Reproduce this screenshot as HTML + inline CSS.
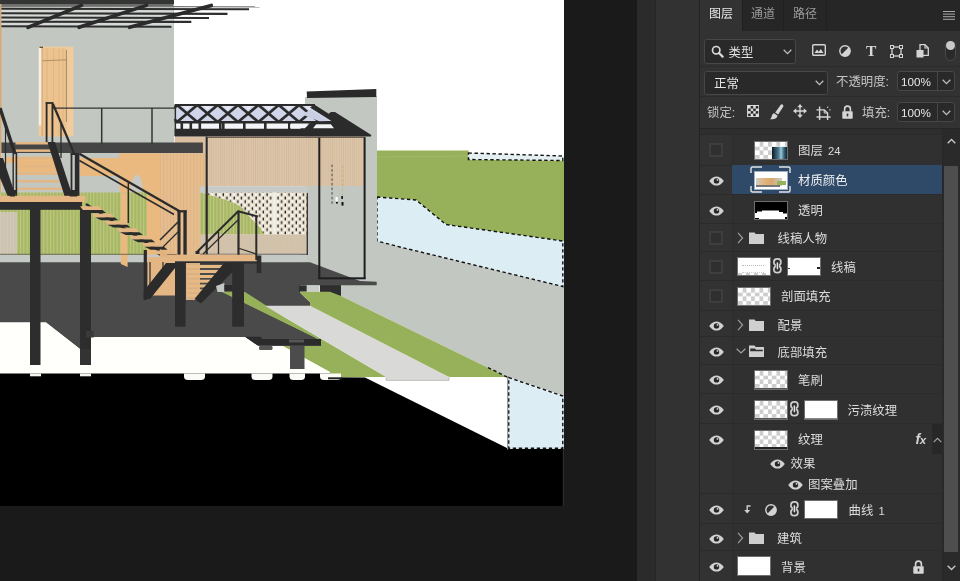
<!DOCTYPE html>
<html lang="zh-CN">
<head>
<meta charset="utf-8">
<title>Photoshop 图层</title>
<style>
html,body{margin:0;padding:0;background:#1a1a1a;overflow:hidden}
body{width:960px;height:581px;position:relative;font-family:"Liberation Sans","Noto Sans CJK SC",sans-serif;font-size:12px;color:#d6d6d6;line-height:1}
.abs{position:absolute}
#cv{position:absolute;left:0;top:0;width:563.5px;height:506px;display:block}
#g1{position:absolute;left:637px;top:0;width:18px;height:581px;background:#2b2b2b}
#g2{position:absolute;left:655px;top:0;width:45px;height:581px;background:#323232;border-left:1px solid #262626;box-sizing:border-box}
#panel{position:absolute;left:699px;top:0;width:261px;height:581px;background:#323232;border-left:1px solid #242424;box-sizing:border-box;overflow:hidden}
#panel .in{position:absolute;left:-700px;top:0;width:960px;height:581px;will-change:transform}
.tabbar{position:absolute;left:700px;top:0;width:260px;height:30px;background:#262626;border-bottom:1px solid #262626}
.tab{position:absolute;top:0;height:31px;line-height:28px;text-align:center;color:#9a9a9a;font-size:12px;border-right:1px solid #202020;box-sizing:border-box}
.tab.on{background:#323232;color:#e6e6e6}
.box{position:absolute;box-sizing:border-box;border:1px solid #474747;border-radius:3px;background:#292929}
.t{position:absolute;white-space:nowrap;font-size:12.4px;line-height:14px;height:14px;color:#dcdcdc}
.row{position:absolute;left:700px;width:242px;background:#303030;border-top:1px solid #2b2b2b;box-sizing:border-box}
.row .ec{position:absolute;left:0;top:0;bottom:0;width:32.5px;background:#323232;border-right:1px solid #2c2c2c;box-sizing:border-box}
.row.sel .bg{position:absolute;left:32px;top:-1.4px;right:0;bottom:0.5px;background:#2f4a69}
.eye{position:absolute;width:15px;height:10px}
.ebox{position:absolute;left:709px;width:14px;height:14px;box-sizing:border-box;border:2px solid #3e3e3e;background:#2f2f2f}
.th{position:absolute;width:34px;height:19.5px;box-sizing:border-box;border:1px solid #6e6e6e;border-top-width:1.5px;background:#fff;overflow:hidden}
.ck{background:conic-gradient(#cdcdcd 25%,#fff 0 50%,#cdcdcd 0 75%,#fff 0) 0 0/8.4px 8.4px}
</style>
</head>
<body>
<!--CANVAS-->
<svg id="cv" viewBox="0 0 563.5 506">
<defs>
<pattern id="pg" width="3.33" height="10" patternUnits="userSpaceOnUse"><rect width="3.33" height="10" fill="#a2ba60"/><rect x="0" width="1.1" height="10" fill="#c9c28c"/></pattern>
<pattern id="pt" width="2.2" height="10" patternUnits="userSpaceOnUse"><rect width="2.2" height="10" fill="#dcc4a8"/><rect x="0" width="0.7" height="10" fill="#d2b99c"/></pattern>
<pattern id="pt2" width="3.33" height="10" patternUnits="userSpaceOnUse"><rect width="3.33" height="10" fill="#cdc4b4"/><rect x="0" width="1.3" height="10" fill="#d9bf9d"/></pattern>
<pattern id="pgr" width="3.33" height="10" patternUnits="userSpaceOnUse"><rect width="3.33" height="10" fill="#c9c3b6"/><rect x="0" width="1.1" height="10" fill="#d8c9ae"/></pattern>
<pattern id="po" width="3.33" height="10" patternUnits="userSpaceOnUse"><rect width="3.33" height="10" fill="#e6bd8e"/><rect x="0" width="1" height="10" fill="#deb384"/></pattern>
<pattern id="pb" width="7.3" height="7" patternUnits="userSpaceOnUse" x="207.5" y="192.5"><rect width="7.3" height="7" fill="#f6f3ea"/><rect x="2.2" width="1.2" height="7" fill="#e6d9c2"/><rect x="5.85" width="1.2" height="7" fill="#e6d9c2"/><rect x="0.5" y="0.6" width="1.3" height="3" fill="#141210"/><rect x="4.15" y="4.1" width="1.3" height="3" fill="#141210"/></pattern>
</defs>
<rect x="0" y="0" width="564" height="506" fill="#ffffff" />
<polygon points="377,150.5 468.5,150.5 468.5,159.5 564,160.5 564,242 446,224.5 416,200 377,197" fill="#96b15a" />
<line x1="377" y1="157" x2="468" y2="156" stroke="#a3bb6a" stroke-width="0.7" />
<polygon points="468.5,153 564,156 564,160.5 468.5,159.5" fill="#e4eff2" />
<polygon points="377,197 416,200 446,224.5 564,241 564,287 400,247 377,241" fill="#dcedf3" />
<polygon points="300,241 377,241 400,247 564,287 564,396 508,377 504,375.5 341,296 341,285 300,285" fill="#c2c7c2" />
<polygon points="377,197 416,200 446,224.5 562.8,241 562.8,286.5 400,247 377,241" fill="none" stroke="#111" stroke-width="1.4" stroke-dasharray="3.4 2.6"/>
<polygon points="468.5,153 562.8,156 562.8,160.5 468.5,159.5" fill="none" stroke="#111" stroke-width="1.4" stroke-dasharray="3.4 2.6"/>
<polygon points="305,97 377,96 377,285 305,285" fill="#c2c7c2" />
<polygon points="306.7,91.5 376.3,89 376.3,97 307,98" fill="#2a2a2a" />
<rect x="0" y="0" width="174" height="146" fill="#c2c7c2" />
<rect x="0" y="0" width="1.4" height="200" fill="#d9a76f" />
<rect x="0" y="0" width="174" height="4" fill="#353535" />
<rect x="1.4" y="4" width="172" height="3.2" fill="#6a6c6a" />
<rect x="1.4" y="7.2" width="171.6" height="19.5" fill="#d6dad6" />
<line x1="1.4" y1="6.2" x2="259.5" y2="6.8" stroke="#7c7e7c" stroke-width="1.3" />
<line x1="1.4" y1="8.7" x2="249" y2="9.2" stroke="#2e2e2e" stroke-width="2.1" />
<line x1="1.4" y1="13.2" x2="227.5" y2="13.9" stroke="#2e2e2e" stroke-width="2.1" />
<line x1="1.4" y1="17.5" x2="209" y2="18" stroke="#2e2e2e" stroke-width="2.1" />
<line x1="1.4" y1="21.7" x2="191.3" y2="21.9" stroke="#2e2e2e" stroke-width="2.1" />
<line x1="1.4" y1="26.3" x2="171.5" y2="26.7" stroke="#2e2e2e" stroke-width="2.1" />
<line x1="81.5" y1="5.4" x2="28" y2="27.3" stroke="#2b2b2b" stroke-width="3.6" stroke-linecap="round"/>
<line x1="146.5" y1="5.4" x2="79" y2="27.3" stroke="#2b2b2b" stroke-width="3.6" stroke-linecap="round"/>
<line x1="211.3" y1="5.4" x2="129.5" y2="27.3" stroke="#2b2b2b" stroke-width="3.6" stroke-linecap="round"/>
<rect x="38.7" y="46.7" width="34.8" height="89.6" fill="#f0cc9d" />
<rect x="38.7" y="47.5" width="3.0" height="78" fill="#f6efe2" />
<rect x="42" y="48" width="24.3" height="88.3" fill="#ecc28e" />
<line x1="47" y1="49" x2="47" y2="136" stroke="#e0b27c" stroke-width="0.8" />
<line x1="53.5" y1="49" x2="53.5" y2="136" stroke="#e0b27c" stroke-width="0.8" />
<line x1="59" y1="49" x2="59" y2="136" stroke="#e0b27c" stroke-width="0.8" />
<line x1="63" y1="49" x2="63" y2="136" stroke="#e0b27c" stroke-width="0.8" />
<line x1="42.3" y1="60.8" x2="66.5" y2="59.8" stroke="#a88a66" stroke-width="0.9" />
<line x1="42.0" y1="48" x2="42.0" y2="136" stroke="#c29a6c" stroke-width="0.8" />
<line x1="66.4" y1="50" x2="66.4" y2="122" stroke="#8c7a62" stroke-width="0.8" />
<rect x="39.5" y="46.7" width="3.5" height="1.3" fill="#5a5040" />
<rect x="1.4" y="146" width="204" height="47" fill="#c2c7c2" />
<rect x="174.7" y="136.5" width="31" height="17" fill="#d9bf9f" />
<polygon points="5,157 52,156.5 56,163 57,172.5 17.5,172.5 17,163 6,163" fill="#e9b980" />
<polygon points="80,158 118,158 120,153.3 160,153.3 160,192.5 120,192.5 119,176 80,176" fill="#e9b980" />
<polygon points="130,192.5 131,183 134,177 137.5,174.5 141,178 143.5,192.5" fill="#c6c9c4" />
<rect x="160" y="153.3" width="45.8" height="102" fill="url(#po)" />
<rect x="0" y="192.5" width="147" height="62.3" fill="url(#pg)" />
<rect x="0" y="212" width="17" height="43" fill="url(#pgr)" />
<rect x="120.8" y="192.5" width="6.5" height="74" fill="#e9b980" />
<rect x="146.7" y="192.5" width="13.3" height="62.5" fill="#e9b980" />
<rect x="208" y="136.5" width="157" height="50" fill="url(#pt)" />
<rect x="200" y="186.3" width="165" height="7.2" fill="#c6cac8" />
<rect x="207.5" y="192.5" width="100" height="42" fill="url(#pb)" />
<rect x="272.6" y="192.5" width="3.6" height="42" fill="#f1eee6" />
<polygon points="200,192.5 207.5,194.5 225,199.4 236,203.7 242.5,208 250,217.5 258.7,226 264,233.5 264,234.5 200,234.5" fill="url(#pg)" />
<rect x="200" y="234.4" width="107.5" height="19.6" fill="url(#pt2)" />
<line x1="200" y1="254.3" x2="307" y2="254.3" stroke="#3a3a3a" stroke-width="0.9" />
<rect x="0" y="254.8" width="307" height="8" fill="#c4c9c5" />
<rect x="308" y="186" width="57" height="100" fill="#c2c7c2" />
<polygon points="0,262.3 310,262.3 360,281 376.7,281.7 376.7,285.3 341,285.3 341,296 320,296 320,285.3 300,285.3 300,292.5 305,297.5 310,302 310,306 265,306 317,338.5 321,339 321,345.8 258,345.8 245,337 86,337 86,349 80,349 46,322.5 0,322.5" fill="#4a4a4a" />
<polygon points="120.8,254 127.6,254 127.6,267 120.8,264" fill="#e9b980" />
<line x1="0" y1="254.3" x2="147" y2="254.3" stroke="#55553f" stroke-width="0.8" />
<rect x="306.7" y="285.3" width="12.8" height="6.4" fill="#c9cdc9" />
<rect x="299" y="285.3" width="7.7" height="6.4" fill="#2e2e2e" />
<rect x="320" y="285.3" width="21" height="10.5" fill="#2e2e2e" />
<polygon points="222,292 245,292 317,338.5 265,306 386,377 330,377 330,372 283,346 321,346 321,339 317,338.5" fill="#96b15a" />
<polygon points="222,291.7 232,291.7 265,306 386,377 330,377 330,372 283,346.5 321,346 321,339 317,338.5" fill="#96b15a" />
<polygon points="265,305.8 310,305.8 449,377 449,380.3 386,380.3 386,377" fill="#d9dad8" />
<polygon points="300,291.7 330,291.7 341,296 504,375.5 508,377 449,377 310,305.8 310,302 305,297.5 300,292.5" fill="#96b15a" />
<polygon points="0,322.5 46,322.5 80,349 86,349 86,337 245,337 258,345.8 283,346 330,372 330,373.5 0,373.5" fill="#fffffb" />
<polygon points="365,377.5 508,377.5 508,448.5" fill="#ffffff" />
<polygon points="0,373.5 330,373.5 330,377.3 365,377.5 508,448.5 508,449 564,449 564,506 0,506" fill="#000000" />
<polygon points="245,336.7 261,336.7 262,339 321,339 321,345.8 258,345.8" fill="#2b2b2b" />
<rect x="289" y="339.5" width="15" height="3" fill="#555555" />
<rect x="259" y="345.8" width="13.5" height="4.2" fill="#555555" rx="1.5"/>
<rect x="290" y="345.8" width="14.5" height="23.2" fill="#4c4c4c" />
<rect x="30" y="373.5" width="11" height="2.8" fill="#f4f4f0" />
<rect x="80" y="373.5" width="11" height="2.8" fill="#f4f4f0" />
<path d="M184 373.5 H205 V376.5 Q205 380 201 380 H188 Q184 380 184 376.5Z" fill="#fafaf6"/>
<path d="M251.5 373.5 H272.5 V376.5 Q272.5 380 268.5 380 H255.5 Q251.5 380 251.5 376.5Z" fill="#fafaf6"/>
<path d="M289.5 373.5 H305.0 V376.5 Q305.0 380 301.0 380 H293.5 Q289.5 380 289.5 376.5Z" fill="#fafaf6"/>
<path d="M320 373.5 H341 V376.5 Q341 380 337 380 H324 Q320 380 320 376.5Z" fill="#fafaf6"/>
<rect x="328" y="377.3" width="14" height="2" fill="#222" />
<polygon points="386,376.5 449,376.5 449,380.3 386,380.3" fill="#d9dad8" />
<path d="M386 377.3 V380.4 H449 V377.3" fill="none" stroke="#a9aaa8" stroke-width="0.7"/>
<polygon points="508,377 564,396 564,449 508,449" fill="#dcedf3" />
<polygon points="508.7,377.6 562.8,396 562.8,448.2 508.7,448.2" fill="none" stroke="#111" stroke-width="1.4" stroke-dasharray="3.4 2.6"/>
<rect x="507" y="377" width="1.2" height="72.5" fill="#9a9a9a" />
<line x1="488" y1="367.6" x2="508" y2="377.4" fill="none" stroke="#111" stroke-width="1.4" stroke-dasharray="3.4 2.6"/>
<rect x="562.9" y="449" width="0.6" height="57" fill="#5a5a5a" />
<rect x="1.4" y="142.5" width="201.5" height="10.5" fill="#454545" />
<polygon points="174.7,104.5 314.2,104.5 334,122 174.7,122" fill="#d0d5ea" />
<rect x="174.7" y="122" width="160" height="7" fill="#f4f5f8" />
<line x1="174.7" y1="108" x2="177" y2="105" stroke="#2b2b2b" stroke-width="2.6" />
<line x1="174.7" y1="119" x2="177" y2="122" stroke="#2b2b2b" stroke-width="2.6" />
<line x1="177.0" y1="105" x2="197.35" y2="122" stroke="#2b2b2b" stroke-width="2.7" />
<line x1="177.0" y1="122" x2="197.35" y2="105" stroke="#2b2b2b" stroke-width="2.7" />
<polygon points="182.175,106 192.175,106 187.175,110.3" fill="#e4e7f3" />
<line x1="197.35" y1="105" x2="217.7" y2="122" stroke="#2b2b2b" stroke-width="2.7" />
<line x1="197.35" y1="122" x2="217.7" y2="105" stroke="#2b2b2b" stroke-width="2.7" />
<polygon points="202.52499999999998,106 212.52499999999998,106 207.52499999999998,110.3" fill="#e4e7f3" />
<line x1="217.7" y1="105" x2="238.05" y2="122" stroke="#2b2b2b" stroke-width="2.7" />
<line x1="217.7" y1="122" x2="238.05" y2="105" stroke="#2b2b2b" stroke-width="2.7" />
<polygon points="222.875,106 232.875,106 227.875,110.3" fill="#e4e7f3" />
<line x1="238.05" y1="105" x2="258.4" y2="122" stroke="#2b2b2b" stroke-width="2.7" />
<line x1="238.05" y1="122" x2="258.4" y2="105" stroke="#2b2b2b" stroke-width="2.7" />
<polygon points="243.225,106 253.225,106 248.225,110.3" fill="#e4e7f3" />
<line x1="258.4" y1="105" x2="278.75" y2="122" stroke="#2b2b2b" stroke-width="2.7" />
<line x1="258.4" y1="122" x2="278.75" y2="105" stroke="#2b2b2b" stroke-width="2.7" />
<polygon points="263.575,106 273.575,106 268.575,110.3" fill="#e4e7f3" />
<line x1="278.75" y1="105" x2="299.1" y2="122" stroke="#2b2b2b" stroke-width="2.7" />
<line x1="278.75" y1="122" x2="299.1" y2="105" stroke="#2b2b2b" stroke-width="2.7" />
<polygon points="283.925,106 293.925,106 288.925,110.3" fill="#e4e7f3" />
<line x1="299.1" y1="105" x2="319.45000000000005" y2="122" stroke="#2b2b2b" stroke-width="2.7" />
<line x1="299.1" y1="122" x2="311.5" y2="111.6" stroke="#2b2b2b" stroke-width="2.7" />
<polygon points="304.27500000000003,106 314.27500000000003,106 309.27500000000003,110.3" fill="#e4e7f3" />
<line x1="174.7" y1="105" x2="315" y2="105" stroke="#2b2b2b" stroke-width="1.8" />
<line x1="174.7" y1="122.3" x2="334" y2="122.3" stroke="#2b2b2b" stroke-width="2.4" />
<line x1="175.3" y1="105" x2="175.3" y2="136" stroke="#2b2b2b" stroke-width="1.6" />
<rect x="180.5" y="122" width="2.6" height="7" fill="#2b2b2b" />
<rect x="189.5" y="122" width="2.6" height="7" fill="#2b2b2b" />
<rect x="198.5" y="122" width="2.6" height="7" fill="#2b2b2b" />
<rect x="219" y="122" width="2.6" height="7" fill="#2b2b2b" />
<rect x="222" y="122" width="2.6" height="7" fill="#2b2b2b" />
<rect x="243" y="122" width="2.6" height="7" fill="#2b2b2b" />
<rect x="264" y="122" width="2.6" height="7" fill="#2b2b2b" />
<rect x="288" y="122" width="2.6" height="7" fill="#2b2b2b" />
<polygon points="314.2,104.4 328.75,113.75 330.8,112 335,112 371.3,135 371,136.4 174.7,136.4 174.7,128.7 300,128.7 309,123.4 318,121.2 333,122 310,107.5" fill="#2b2b2b" />
<polygon points="302.7,114.8 310,109.6 315.2,112.7 327.7,121 319.4,121.3" fill="#c9cfe2" />
<polygon points="313,128.3 334,128.3 330.8,124.2 316.25,124.2" fill="#f1f3f6" />
<polygon points="290.2,128.3 304.8,128.3 309,124.2 290.2,124.2" fill="#f4f5f8" />
<rect x="205.6" y="136.5" width="2.2" height="118" fill="#2e2a28" />
<rect x="318.3" y="137" width="2" height="142" fill="#1f1f1f" />
<rect x="363.6" y="137" width="2" height="142" fill="#1f1f1f" />
<rect x="318.3" y="277.3" width="47.3" height="2" fill="#1f1f1f" />
<line x1="208" y1="137.3" x2="365" y2="137.3" stroke="#5a4a3c" stroke-width="1" />
<rect x="306.6" y="193" width="1.4" height="62" fill="#3a3532" />
<rect x="331.4" y="164.5" width="1.3" height="2.6" fill="#6a6660" />
<rect x="331.4" y="169.1" width="1.3" height="2.6" fill="#6a6660" />
<rect x="331.4" y="173.7" width="1.3" height="2.6" fill="#6a6660" />
<rect x="331.4" y="178.3" width="1.3" height="2.6" fill="#6a6660" />
<rect x="331.4" y="182.9" width="1.3" height="2.6" fill="#6a6660" />
<rect x="331.4" y="187.5" width="1.3" height="2.6" fill="#6a6660" />
<rect x="331.4" y="192.1" width="1.3" height="2.6" fill="#6a6660" />
<rect x="331.4" y="196.7" width="1.3" height="2.6" fill="#6a6660" />
<rect x="331.4" y="201.3" width="1.3" height="2.6" fill="#6a6660" />
<rect x="342" y="165.5" width="0.9" height="2.4" fill="#c9b57a" />
<rect x="337" y="166.0" width="0.8" height="2.2" fill="#cfc9a8" />
<rect x="342" y="170.1" width="0.9" height="2.4" fill="#c9b57a" />
<rect x="337" y="170.6" width="0.8" height="2.2" fill="#cfc9a8" />
<rect x="342" y="174.7" width="0.9" height="2.4" fill="#c9b57a" />
<rect x="337" y="175.2" width="0.8" height="2.2" fill="#cfc9a8" />
<rect x="342" y="179.3" width="0.9" height="2.4" fill="#c9b57a" />
<rect x="337" y="179.8" width="0.8" height="2.2" fill="#cfc9a8" />
<rect x="342" y="183.9" width="0.9" height="2.4" fill="#c9b57a" />
<rect x="337" y="184.4" width="0.8" height="2.2" fill="#cfc9a8" />
<rect x="342" y="188.5" width="0.9" height="2.4" fill="#c9b57a" />
<rect x="337" y="189.0" width="0.8" height="2.2" fill="#cfc9a8" />
<rect x="342" y="193.1" width="0.9" height="2.4" fill="#c9b57a" />
<rect x="337" y="193.6" width="0.8" height="2.2" fill="#cfc9a8" />
<rect x="335.5" y="197" width="2.2" height="4" fill="#fff" />
<rect x="341.3" y="196" width="1.6" height="3" fill="#111" />
<rect x="341.5" y="202" width="2" height="3.6" fill="#111" />
<rect x="336" y="202" width="1.8" height="1.6" fill="#111" />
<line x1="53" y1="108.2" x2="175" y2="108.2" stroke="#333" stroke-width="1.3" />
<line x1="101.7" y1="108" x2="101.7" y2="144.5" stroke="#333" stroke-width="1.5" />
<line x1="152" y1="108" x2="152" y2="144.5" stroke="#333" stroke-width="1.5" />
<line x1="46.6" y1="102.5" x2="46.6" y2="142.5" stroke="#2b2b2b" stroke-width="1.8" />
<line x1="52.4" y1="102.5" x2="52.4" y2="142.5" stroke="#2b2b2b" stroke-width="1.8" />
<line x1="45.7" y1="103" x2="53.3" y2="103" stroke="#2b2b2b" stroke-width="1.8" />
<rect x="15.5" y="142" width="33.2" height="2.5" fill="#e3b683" />
<rect x="15.5" y="149.4" width="36.5" height="2.5" fill="#e3b683" />
<rect x="15.5" y="156.9" width="38.9" height="2.5" fill="#e3b683" />
<rect x="15.5" y="165" width="41.5" height="2.5" fill="#e3b683" />
<rect x="15.5" y="172.5" width="44.5" height="2.5" fill="#e3b683" />
<rect x="15.5" y="180" width="47.0" height="2.5" fill="#e3b683" />
<rect x="15.5" y="187.5" width="50.099999999999994" height="2.5" fill="#e3b683" />
<polygon points="47.5,142 55,142 72.5,196 64.5,196" fill="#2b2b2b" />
<line x1="53" y1="104" x2="74.5" y2="154.5" stroke="#2b2b2b" stroke-width="2.2" />
<line x1="61" y1="124" x2="61" y2="158" stroke="#2b2b2b" stroke-width="1.3" />
<rect x="70.6" y="153.5" width="1.8" height="43" fill="#2b2b2b" />
<rect x="74.8" y="153.5" width="4.6" height="43" fill="#2b2b2b" />
<rect x="70.6" y="153" width="8.8" height="2" fill="#2b2b2b" />
<line x1="0" y1="108" x2="15" y2="154" stroke="#2b2b2b" stroke-width="3.4" />
<rect x="12.5" y="153" width="1.4" height="44" fill="#2b2b2b" />
<rect x="15.6" y="153" width="1.6" height="44" fill="#2b2b2b" />
<polygon points="0,158 3,158 16,197 8,197 0,178" fill="#2b2b2b" />
<line x1="5.5" y1="126" x2="5.5" y2="172" stroke="#2b2b2b" stroke-width="1.2" />
<rect x="0" y="195.8" width="85.5" height="6.2" fill="#e3b683" />
<rect x="0" y="202" width="82" height="7.8" fill="#2d2d2d" />
<polygon points="8,190 17,190 15,196.5 10,196.5" fill="#2b2b2b" />
<polygon points="66,190 79,190 77,196.5 70,196.5" fill="#2b2b2b" />
<rect x="30" y="209" width="10.5" height="156" fill="#2d2d2d" />
<rect x="80" y="209" width="11" height="140" fill="#2d2d2d" />
<rect x="80" y="349" width="11" height="16" fill="#333" />
<rect x="86" y="331" width="7.7" height="6.5" fill="#3a3a3a" />
<line x1="86" y1="204" x2="172" y2="259" stroke="#2b2b2b" stroke-width="2.2" />
<polygon points="80.0,206.3 99.0,206.3 102.5,210.10000000000002 83.0,210.10000000000002" fill="#e3b683" />
<polygon points="83.0,210.10000000000002 102.5,210.10000000000002 106.0,212.9 89.0,212.9" fill="#2b2b2b" />
<polygon points="92.3,213.65 111.3,213.65 114.8,217.45000000000002 95.3,217.45000000000002" fill="#e3b683" />
<polygon points="95.3,217.45000000000002 114.8,217.45000000000002 118.3,220.25 101.3,220.25" fill="#2b2b2b" />
<polygon points="104.6,221.0 123.6,221.0 127.1,224.8 107.6,224.8" fill="#e3b683" />
<polygon points="107.6,224.8 127.1,224.8 130.6,227.6 113.6,227.6" fill="#2b2b2b" />
<polygon points="116.9,228.35000000000002 135.9,228.35000000000002 139.4,232.15000000000003 119.9,232.15000000000003" fill="#e3b683" />
<polygon points="119.9,232.15000000000003 139.4,232.15000000000003 142.9,234.95000000000002 125.9,234.95000000000002" fill="#2b2b2b" />
<polygon points="129.2,235.70000000000002 148.2,235.70000000000002 151.7,239.50000000000003 132.2,239.50000000000003" fill="#e3b683" />
<polygon points="132.2,239.50000000000003 151.7,239.50000000000003 155.2,242.3 138.2,242.3" fill="#2b2b2b" />
<polygon points="141.5,243.05 160.5,243.05 164.0,246.85000000000002 144.5,246.85000000000002" fill="#e3b683" />
<polygon points="144.5,246.85000000000002 164.0,246.85000000000002 167.5,249.65 150.5,249.65" fill="#2b2b2b" />
<polygon points="153.8,250.4 172.8,250.4 176.3,254.20000000000002 156.8,254.20000000000002" fill="#e3b683" />
<polygon points="156.8,254.20000000000002 176.3,254.20000000000002 179.8,257.0 162.8,257.0" fill="#2b2b2b" />
<line x1="79.4" y1="153.8" x2="180" y2="211.5" stroke="#2b2b2b" stroke-width="2.4" />
<line x1="79.4" y1="160.5" x2="174" y2="214.5" stroke="#2b2b2b" stroke-width="1.5" />
<line x1="128.3" y1="183" x2="128.3" y2="223" stroke="#2b2b2b" stroke-width="1.4" />
<rect x="177.5" y="210.7" width="3" height="45" fill="#2b2b2b" />
<rect x="183.4" y="210.7" width="3.3" height="45" fill="#2b2b2b" />
<rect x="177.5" y="210.2" width="9.2" height="2.2" fill="#2b2b2b" />
<line x1="178" y1="222" x2="160" y2="240" stroke="#2b2b2b" stroke-width="1.6" />
<line x1="178" y1="232" x2="163" y2="247" stroke="#2b2b2b" stroke-width="1.3" />
<rect x="166.7" y="254.6" width="90.3" height="6.8" fill="#e3b683" />
<rect x="168" y="261.3" width="93" height="2.2" fill="#2d2d2d" />
<rect x="256.7" y="255.5" width="4.6" height="17.5" fill="#2d2d2d" />
<polygon points="160,249 168,255 168,261 160,256" fill="#e2b27c" />
<rect x="175" y="263" width="10.6" height="63.7" fill="#2d2d2d" />
<rect x="232.2" y="263" width="11.8" height="63.7" fill="#2d2d2d" />
<rect x="147.5" y="257" width="27.5" height="38.5" fill="#e3b683" />
<rect x="143.7" y="250" width="3.2" height="50" fill="#2b2b2b" />
<polygon points="166,263 175,263 175,268 150,299 143.7,299 143.7,291" fill="#2b2b2b" />
<line x1="150" y1="262" x2="150" y2="285" stroke="#2b2b2b" stroke-width="1.2" />
<line x1="163" y1="262" x2="163" y2="272" stroke="#2b2b2b" stroke-width="1.2" />
<rect x="186" y="263" width="14" height="37" fill="#d9b184" />
<rect x="187" y="265" width="43" height="3" fill="#e6b985" />
<rect x="187" y="270" width="39" height="3" fill="#e6b985" />
<rect x="187" y="275" width="34" height="3" fill="#e6b985" />
<rect x="187" y="279.7" width="29" height="3" fill="#e6b985" />
<rect x="187" y="284.5" width="24" height="3" fill="#e6b985" />
<rect x="187" y="289.2" width="19" height="3" fill="#e6b985" />
<rect x="187" y="293.8" width="15" height="3" fill="#e6b985" />
<polygon points="224,263 232.5,263 232.5,272 201,303.5 194.5,299" fill="#2b2b2b" />
<polygon points="216,286 224.4,283 224.4,292 217.5,292" fill="#c4c8c4" />
<rect x="224.4" y="285" width="8" height="5.8" fill="#2b2b2b" />
<line x1="197" y1="252" x2="238.5" y2="211" stroke="#2b2b2b" stroke-width="2.0" />
<line x1="203" y1="254" x2="238" y2="220" stroke="#2b2b2b" stroke-width="1.2" />
<rect x="237.4" y="210.7" width="2.2" height="44" fill="#2b2b2b" />
<line x1="238" y1="211.3" x2="258" y2="216.5" stroke="#2b2b2b" stroke-width="2.0" />
<rect x="255.3" y="216" width="2" height="44" fill="#2b2b2b" />
<line x1="218.5" y1="232" x2="218.5" y2="254" stroke="#2b2b2b" stroke-width="1.3" />
<line x1="238" y1="248" x2="256" y2="254" stroke="#2b2b2b" stroke-width="1.2" />
<rect x="195.5" y="251" width="4" height="3" fill="#2b2b2b" />
</svg>
<div id="g1"></div>
<div id="g2"></div>
<div id="panel"><div class="in">
<div class="tabbar"></div>
<div class="tab on" style="left:700px;width:43px">图层</div>
<div class="tab" style="left:743px;width:41px">通道</div>
<div class="tab" style="left:784px;width:43px">路径</div>
<svg class="abs" style="left:943px;top:11px" width="12" height="9" viewBox="0 0 12 9"><path d="M0 0.5H12M0 3.1H12M0 5.7H12M0 8.3H12" stroke="#a8a8a8" stroke-width="1"/></svg>
<div class="box" style="left:704px;top:39px;width:92px;height:25px"></div>
<svg class="abs" style="left:711px;top:45px" width="13" height="13" viewBox="0 0 13 13"><circle cx="5.2" cy="5.2" r="3.7" fill="none" stroke="#dadada" stroke-width="1.7"/><path d="M8 8 L11.6 11.6" stroke="#dadada" stroke-width="2.2" stroke-linecap="round"/></svg>
<div class="t" style="left:728.5px;top:45.7px;color:#e2e2e2;">类型</div>
<svg class="abs" style="left:783px;top:49px" width="9" height="6" viewBox="0 0 9 6"><path d="M0.7 0.8 L4.5 4.6 L8.3 0.8" fill="none" stroke="#bdbdbd" stroke-width="1.3"/></svg>
<svg class="abs" style="left:812px;top:44px" width="14" height="12" viewBox="0 0 14 12"><rect x="0.7" y="0.7" width="12.6" height="10.6" rx="1" fill="none" stroke="#d4d4d4" stroke-width="1.4"/><path d="M2.5 9 L5 5.6 L6.8 7.8 L8.8 5 L11.5 9Z" fill="#d4d4d4"/></svg>
<svg class="abs" style="left:839px;top:45px" width="12" height="12" viewBox="0 0 12 12"><circle cx="6" cy="6" r="5.2" fill="none" stroke="#d4d4d4" stroke-width="1.4"/><path d="M9.7 2.3 A5.2 5.2 0 0 1 2.3 9.7Z" fill="#d4d4d4"/></svg>
<div class="t" style="left:866px;top:42.6px;font-family:'Liberation Serif',serif;font-weight:bold;font-size:15.5px;line-height:15px;height:15px;color:#d8d8d8">T</div>
<svg class="abs" style="left:890px;top:45px" width="13" height="13" viewBox="0 0 13 13"><rect x="2" y="2" width="9" height="9" fill="none" stroke="#d4d4d4" stroke-width="1.3"/><g fill="#323232" stroke="#d4d4d4" stroke-width="1"><rect x="0.5" y="0.5" width="3" height="3"/><rect x="9.5" y="0.5" width="3" height="3"/><rect x="0.5" y="9.5" width="3" height="3"/><rect x="9.5" y="9.5" width="3" height="3"/></g></svg>
<svg class="abs" style="left:916px;top:44px" width="13" height="14" viewBox="0 0 13 14"><path d="M4 0.7 H9 L12.3 4 V11.3 H4Z" fill="none" stroke="#d4d4d4" stroke-width="1.3"/><path d="M9 0.7 V4 H12.3" fill="none" stroke="#d4d4d4" stroke-width="1.1"/><rect x="0.5" y="6" width="7" height="7.5" fill="#d4d4d4"/></svg>
<div class="abs" style="left:945px;top:41px;width:11px;height:20px;box-sizing:border-box;border:1px solid #4a4a4a;border-radius:6px;background:#2a2a2a"></div>
<div class="abs" style="left:946px;top:41px;width:9px;height:9px;border-radius:5px;background:#c9c9c9"></div>
<div class="abs" style="left:700px;top:66px;width:260px;height:1px;background:#2b2b2b"></div><div class="abs" style="left:700px;top:96px;width:260px;height:1px;background:#2b2b2b"></div>
<div class="box" style="left:704px;top:71px;width:124px;height:24px"></div>
<div class="t" style="left:714px;top:76.7px;color:#e6e6e6;">正常</div>
<svg class="abs" style="left:815px;top:80px" width="9" height="6" viewBox="0 0 9 6"><path d="M0.7 0.8 L4.5 4.6 L8.3 0.8" fill="none" stroke="#bdbdbd" stroke-width="1.3"/></svg>
<div class="t" style="left:836px;top:75.2px;color:#c4c4c4;">不透明度:</div>
<div class="box" style="left:897px;top:71px;width:58px;height:20px"></div><div class="abs" style="left:937px;top:72px;width:1px;height:18px;background:#474747"></div>
<div class="t" style="left:901px;top:74.7px;color:#e6e6e6;font-size:11.7px">100%</div>
<svg class="abs" style="left:942px;top:79px" width="9" height="6" viewBox="0 0 9 6"><path d="M0.7 0.8 L4.5 4.6 L8.3 0.8" fill="none" stroke="#bdbdbd" stroke-width="1.3"/></svg>
<div class="t" style="left:707px;top:105.7px;color:#c4c4c4;">锁定:</div>
<svg class="abs" style="left:747px;top:105.3px" width="12.4" height="12.2" viewBox="0 0 12 12"><rect x="0" y="0" width="12" height="12" fill="#dedede"/><g fill="#2a2a2a"><rect x="3.5" y="1" width="2.5" height="2.5"/><rect x="8.5" y="1" width="2.5" height="2.5"/><rect x="1" y="3.5" width="2.5" height="2.5"/><rect x="6" y="3.5" width="2.5" height="2.5"/><rect x="3.5" y="6" width="2.5" height="2.5"/><rect x="8.5" y="6" width="2.5" height="2.5"/><rect x="1" y="8.5" width="2.5" height="2.5"/><rect x="6" y="8.5" width="2.5" height="2.5"/></g></svg>
<svg class="abs" style="left:769px;top:104px" width="15" height="16" viewBox="0 0 15 16"><path d="M13.4 0.5 C14.6 1.1 14.6 2.2 14 3.1 L9.2 10.6 L6.2 8.6 L11.4 1.3 C12 0.4 12.7 0.1 13.4 0.5Z" fill="#d6d6d6"/><path d="M5.5 9.4 L8.4 11.4 C8.4 14 5.6 15.8 0.8 15.2 C2.6 14 2.4 12.8 3 11.4 C3.5 10 4.5 9.2 5.5 9.4Z" fill="#d6d6d6"/></svg>
<svg class="abs" style="left:793px;top:104.4px" width="14" height="14" viewBox="0 0 14 14"><path d="M7 2V12M2 7H12" stroke="#d6d6d6" stroke-width="1.3"/><path d="M7 0 L9.7 3.3 H4.3Z M7 14 L9.7 10.7 H4.3Z M0 7 L3.3 4.3 V9.7Z M14 7 L10.7 4.3 V9.7Z" fill="#d6d6d6"/></svg>
<svg class="abs" style="left:816px;top:105.5px" width="15" height="15" viewBox="0 0 15 15"><path d="M3.6 0.5 V14 M0.5 3.9 H8.2 L11.6 7 V14 M0.5 11 H14.6" fill="none" stroke="#d6d6d6" stroke-width="1.4"/><path d="M8.2 3.9 V7 H11.6" fill="none" stroke="#d6d6d6" stroke-width="1"/><rect x="11" y="0.6" width="1.3" height="1.3" fill="#bdbdbd"/><rect x="13.3" y="3.2" width="1.3" height="1.3" fill="#bdbdbd"/></svg>
<svg class="abs" style="left:842px;top:105px" width="11" height="14" viewBox="0 0 11 14"><path d="M2.6 6.5 V4 A2.9 2.9 0 0 1 8.4 4 V6.5" fill="none" stroke="#d6d6d6" stroke-width="1.6"/><rect x="0.3" y="6.2" width="10.4" height="7.5" rx="0.8" fill="#d6d6d6"/><rect x="4.7" y="8.6" width="1.6" height="2.8" fill="#323232"/></svg>
<div class="t" style="left:862px;top:105.7px;color:#c4c4c4;">填充:</div>
<div class="box" style="left:897px;top:102px;width:58px;height:20px"></div><div class="abs" style="left:937px;top:103px;width:1px;height:18px;background:#474747"></div>
<div class="t" style="left:901px;top:105.7px;color:#e6e6e6;font-size:11.7px">100%</div>
<svg class="abs" style="left:942px;top:110px" width="9" height="6" viewBox="0 0 9 6"><path d="M0.7 0.8 L4.5 4.6 L8.3 0.8" fill="none" stroke="#bdbdbd" stroke-width="1.3"/></svg>
<div class="abs" style="left:700px;top:128px;width:260px;height:453px;background:#2e2e2e;border-top:1px solid #262626;box-sizing:border-box"></div>
<div class="row" style="top:134px;height:31px"><div class="ec"></div></div>
<div class="row sel" style="top:165px;height:29px"><div class="ec"></div><div class="bg"></div></div>
<div class="row" style="top:194px;height:29px"><div class="ec"></div></div>
<div class="row" style="top:223px;height:28px"><div class="ec"></div></div>
<div class="row" style="top:251px;height:29px"><div class="ec"></div></div>
<div class="row" style="top:280px;height:30px"><div class="ec"></div></div>
<div class="row" style="top:310px;height:26px"><div class="ec"></div></div>
<div class="row" style="top:336px;height:28px"><div class="ec"></div></div>
<div class="row" style="top:364px;height:29px"><div class="ec"></div></div>
<div class="row" style="top:393px;height:30px"><div class="ec"></div></div>
<div class="row" style="top:423px;height:70px"><div class="ec"></div></div>
<div class="row" style="top:493px;height:30px"><div class="ec"></div></div>
<div class="row" style="top:523px;height:27px"><div class="ec"></div></div>
<div class="row" style="top:550px;height:32px"><div class="ec"></div></div>
<div class="ebox" style="top:143px"></div>
<div class="th ck" style="left:753.5px;top:140.5px;"><div style="position:absolute;right:0;bottom:0;width:15px;height:12px;background:linear-gradient(90deg,#0d1a22,#4d7f96 45%,#9ec6d6 60%,#35667d 80%,#10222c)"></div></div>
<div class="t" style="left:798px;top:144.29999999999998px;color:#dcdcdc;">图层<span style="font-size:11.3px;margin-left:5.2px">24</span></div>
<svg class="abs" style="left:709.0px;top:176px" width="15" height="10" viewBox="0 0 15 10"><path d="M0.2 5 C2.8 1.4 5.2 0.4 7.5 0.4 C9.8 0.4 12.2 1.4 14.8 5 C12.2 8.6 9.8 9.6 7.5 9.6 C5.2 9.6 2.8 8.6 0.2 5Z" fill="#d2d2d2"/><circle cx="7.5" cy="4.9" r="2.7" fill="#262626"/><circle cx="8.5" cy="3.9" r="0.9" fill="#d2d2d2"/></svg>
<svg class="abs" style="left:750px;top:166px" width="41" height="27" viewBox="0 0 41 27"><path d="M1 7 V2.5 Q1 1 2.5 1 H12 M29 1 H38.5 Q40 1 40 2.5 V7 M40 20 V24.5 Q40 26 38.5 26 H29 M12 26 H2.5 Q1 26 1 24.5 V20" fill="none" stroke="#e4e4e4" stroke-width="1.4"/></svg>
<div class="th " style="left:753.5px;top:170.5px;border-color:#9fb0c4"><div style="position:absolute;left:1px;top:6px;width:26px;height:8px;background:linear-gradient(90deg,#c9cec8,#e3b57f 30%,#d9a870 60%,#c9cec8)"></div><div style="position:absolute;left:22px;top:9px;width:9px;height:4px;background:#96b35a"></div><div style="position:absolute;left:1px;top:13px;width:24px;height:2px;background:#777"></div></div>
<div class="t" style="left:798px;top:174.2px;color:#f0f0f0;">材质颜色</div>
<svg class="abs" style="left:709.0px;top:205.5px" width="15" height="10" viewBox="0 0 15 10"><path d="M0.2 5 C2.8 1.4 5.2 0.4 7.5 0.4 C9.8 0.4 12.2 1.4 14.8 5 C12.2 8.6 9.8 9.6 7.5 9.6 C5.2 9.6 2.8 8.6 0.2 5Z" fill="#d2d2d2"/><circle cx="7.5" cy="4.9" r="2.7" fill="#262626"/><circle cx="8.5" cy="3.9" r="0.9" fill="#d2d2d2"/></svg>
<div class="th " style="left:753.5px;top:200.5px;"><div style="position:absolute;left:0;top:0;width:32px;height:17px;background:#000"></div><svg style="position:absolute;left:0;top:0" width="32" height="17" viewBox="0 0 32 17"><path d="M0 16 V11 H2 V9.5 H7 V8.5 H24 V10 H28 V11.5 H32 V15 H30 V17 H4 V16Z" fill="#fff"/></svg></div>
<div class="t" style="left:798px;top:204.2px;color:#dcdcdc;">透明</div>
<div class="ebox" style="top:231px"></div>
<svg class="abs" style="left:737px;top:232px" width="7" height="12" viewBox="0 0 7 12"><path d="M1 0.8 L5.6 6 L1 11.2" fill="none" stroke="#9c9c9c" stroke-width="1.2"/></svg>
<svg class="abs" style="left:749px;top:231.6px" width="15" height="12" viewBox="0 0 15 12"><path d="M0 0.6 H5.6 L6.6 2 H15 V12 H0Z" fill="#cfcfcf"/><rect x="0" y="2.6" width="15" height="0.9" fill="#e4e4e4" opacity="0.0"/></svg>
<div class="t" style="left:777.5px;top:232.2px;color:#dcdcdc;">线稿人物</div>
<div class="ebox" style="top:260px"></div>
<div class="th " style="left:736.5px;top:256.5px;"><div style="position:absolute;left:4px;top:7px;width:22px;height:6px;border-top:1px dotted #bbb;border-bottom:1px dotted #ccc"></div><div style="position:absolute;left:0;bottom:0;width:32px;height:2px;background:repeating-linear-gradient(90deg,#ccc 0 4px,#fff 4px 8px)"></div></div>
<svg class="abs" style="left:773.2px;top:258.09999999999997px" width="8.8" height="15.6" viewBox="0 0 8.8 15.6"><rect x="0.9" y="0.9" width="7" height="6.6" rx="3.2" fill="none" stroke="#cfcfcf" stroke-width="1.7"/><rect x="0.9" y="8.1" width="7" height="6.6" rx="3.2" fill="none" stroke="#cfcfcf" stroke-width="1.7"/><rect x="2.9" y="3.6" width="3" height="8.4" rx="1.5" fill="#303030"/><rect x="3.6" y="4.2" width="1.6" height="7.2" rx="0.8" fill="#e2e2e2"/></svg>
<div class="th " style="left:786.5px;top:256.5px;"><div style="position:absolute;right:0;top:9px;width:3px;height:2px;background:#222"></div><div style="position:absolute;left:0;top:10px;width:2px;height:1px;background:#444"></div></div>
<div class="t" style="left:831px;top:260.7px;color:#dcdcdc;">线稿</div>
<div class="ebox" style="top:289px"></div>
<div class="th ck" style="left:736.5px;top:286.5px;"></div>
<div class="t" style="left:781px;top:290.2px;color:#dcdcdc;">剖面填充</div>
<svg class="abs" style="left:709.0px;top:320.5px" width="15" height="10" viewBox="0 0 15 10"><path d="M0.2 5 C2.8 1.4 5.2 0.4 7.5 0.4 C9.8 0.4 12.2 1.4 14.8 5 C12.2 8.6 9.8 9.6 7.5 9.6 C5.2 9.6 2.8 8.6 0.2 5Z" fill="#d2d2d2"/><circle cx="7.5" cy="4.9" r="2.7" fill="#262626"/><circle cx="8.5" cy="3.9" r="0.9" fill="#d2d2d2"/></svg>
<svg class="abs" style="left:737px;top:319px" width="7" height="12" viewBox="0 0 7 12"><path d="M1 0.8 L5.6 6 L1 11.2" fill="none" stroke="#9c9c9c" stroke-width="1.2"/></svg>
<svg class="abs" style="left:749px;top:318.6px" width="15" height="12" viewBox="0 0 15 12"><path d="M0 0.6 H5.6 L6.6 2 H15 V12 H0Z" fill="#cfcfcf"/><rect x="0" y="2.6" width="15" height="0.9" fill="#e4e4e4" opacity="0.0"/></svg>
<div class="t" style="left:777.5px;top:319.2px;color:#dcdcdc;">配景</div>
<svg class="abs" style="left:709.0px;top:347px" width="15" height="10" viewBox="0 0 15 10"><path d="M0.2 5 C2.8 1.4 5.2 0.4 7.5 0.4 C9.8 0.4 12.2 1.4 14.8 5 C12.2 8.6 9.8 9.6 7.5 9.6 C5.2 9.6 2.8 8.6 0.2 5Z" fill="#d2d2d2"/><circle cx="7.5" cy="4.9" r="2.7" fill="#262626"/><circle cx="8.5" cy="3.9" r="0.9" fill="#d2d2d2"/></svg>
<svg class="abs" style="left:735.6px;top:348px" width="10" height="6" viewBox="0 0 10 6"><path d="M0.6 0.8 L5 5 L9.4 0.8" fill="none" stroke="#a2a2a2" stroke-width="1.2"/></svg>
<svg class="abs" style="left:749px;top:345px" width="15" height="12" viewBox="0 0 15 12"><path d="M0 0.6 H5.6 L6.6 2 H15 V12 H0Z" fill="#cfcfcf"/><path d="M1.2 3.4 H6 L7 4.8 H13.8 V6.2 H1.2Z" fill="#303030"/></svg>
<div class="t" style="left:777.5px;top:345.7px;color:#dcdcdc;">底部填充</div>
<svg class="abs" style="left:709.0px;top:375px" width="15" height="10" viewBox="0 0 15 10"><path d="M0.2 5 C2.8 1.4 5.2 0.4 7.5 0.4 C9.8 0.4 12.2 1.4 14.8 5 C12.2 8.6 9.8 9.6 7.5 9.6 C5.2 9.6 2.8 8.6 0.2 5Z" fill="#d2d2d2"/><circle cx="7.5" cy="4.9" r="2.7" fill="#262626"/><circle cx="8.5" cy="3.9" r="0.9" fill="#d2d2d2"/></svg>
<div class="th ck" style="left:753.5px;top:370.0px;"><div style="position:absolute;left:0;bottom:0;width:32px;height:1px;background:#555"></div></div>
<div class="t" style="left:798px;top:373.7px;color:#dcdcdc;">笔刷</div>
<svg class="abs" style="left:709.0px;top:405px" width="15" height="10" viewBox="0 0 15 10"><path d="M0.2 5 C2.8 1.4 5.2 0.4 7.5 0.4 C9.8 0.4 12.2 1.4 14.8 5 C12.2 8.6 9.8 9.6 7.5 9.6 C5.2 9.6 2.8 8.6 0.2 5Z" fill="#d2d2d2"/><circle cx="7.5" cy="4.9" r="2.7" fill="#262626"/><circle cx="8.5" cy="3.9" r="0.9" fill="#d2d2d2"/></svg>
<div class="th ck" style="left:753.5px;top:400.0px;"><div style="position:absolute;left:0;bottom:0;width:32px;height:1px;background:#555"></div></div>
<svg class="abs" style="left:790.4px;top:401.3px" width="8.8" height="15.6" viewBox="0 0 8.8 15.6"><rect x="0.9" y="0.9" width="7" height="6.6" rx="3.2" fill="none" stroke="#cfcfcf" stroke-width="1.7"/><rect x="0.9" y="8.1" width="7" height="6.6" rx="3.2" fill="none" stroke="#cfcfcf" stroke-width="1.7"/><rect x="2.9" y="3.6" width="3" height="8.4" rx="1.5" fill="#303030"/><rect x="3.6" y="4.2" width="1.6" height="7.2" rx="0.8" fill="#e2e2e2"/></svg>
<div class="th " style="left:803.5px;top:400.0px;"><div style="position:absolute;left:0;bottom:0;width:32px;height:1px;background:#888"></div></div>
<div class="t" style="left:847.5px;top:403.7px;color:#dcdcdc;">污渍纹理</div>
<svg class="abs" style="left:709.0px;top:434.5px" width="15" height="10" viewBox="0 0 15 10"><path d="M0.2 5 C2.8 1.4 5.2 0.4 7.5 0.4 C9.8 0.4 12.2 1.4 14.8 5 C12.2 8.6 9.8 9.6 7.5 9.6 C5.2 9.6 2.8 8.6 0.2 5Z" fill="#d2d2d2"/><circle cx="7.5" cy="4.9" r="2.7" fill="#262626"/><circle cx="8.5" cy="3.9" r="0.9" fill="#d2d2d2"/></svg>
<div class="th ck" style="left:753.5px;top:430.0px;"><div style="position:absolute;left:0;bottom:0;width:32px;height:2px;background:#222"></div></div>
<div class="t" style="left:798px;top:433.2px;color:#dcdcdc;">纹理</div>
<div class="t" style="left:915.5px;top:431px;font-family:'Liberation Sans',sans-serif;font-style:italic;font-weight:bold;font-size:14px;line-height:16px;height:16px;color:#d4d4d4;letter-spacing:-0.5px">f<span style="font-size:11.5px;position:relative;top:-0.5px">x</span></div>
<div class="abs" style="left:932px;top:424px;width:10px;height:30px;background:#272727"></div>
<svg class="abs" style="left:933px;top:436.5px" width="9" height="6" viewBox="0 0 9 6"><path d="M0.7 5.2 L4.5 1.4 L8.3 5.2" fill="none" stroke="#a4a4a4" stroke-width="1.2"/></svg>
<svg class="abs" style="left:769.5px;top:459px" width="15" height="10" viewBox="0 0 15 10"><path d="M0.2 5 C2.8 1.4 5.2 0.4 7.5 0.4 C9.8 0.4 12.2 1.4 14.8 5 C12.2 8.6 9.8 9.6 7.5 9.6 C5.2 9.6 2.8 8.6 0.2 5Z" fill="#d2d2d2"/><circle cx="7.5" cy="4.9" r="2.7" fill="#262626"/><circle cx="8.5" cy="3.9" r="0.9" fill="#d2d2d2"/></svg>
<div class="t" style="left:790.5px;top:457.2px;color:#dcdcdc;">效果</div>
<svg class="abs" style="left:787.5px;top:479.5px" width="15" height="10" viewBox="0 0 15 10"><path d="M0.2 5 C2.8 1.4 5.2 0.4 7.5 0.4 C9.8 0.4 12.2 1.4 14.8 5 C12.2 8.6 9.8 9.6 7.5 9.6 C5.2 9.6 2.8 8.6 0.2 5Z" fill="#d2d2d2"/><circle cx="7.5" cy="4.9" r="2.7" fill="#262626"/><circle cx="8.5" cy="3.9" r="0.9" fill="#d2d2d2"/></svg>
<div class="t" style="left:808px;top:477.7px;color:#dcdcdc;">图案叠加</div>
<svg class="abs" style="left:709.0px;top:505px" width="15" height="10" viewBox="0 0 15 10"><path d="M0.2 5 C2.8 1.4 5.2 0.4 7.5 0.4 C9.8 0.4 12.2 1.4 14.8 5 C12.2 8.6 9.8 9.6 7.5 9.6 C5.2 9.6 2.8 8.6 0.2 5Z" fill="#d2d2d2"/><circle cx="7.5" cy="4.9" r="2.7" fill="#262626"/><circle cx="8.5" cy="3.9" r="0.9" fill="#d2d2d2"/></svg>
<svg class="abs" style="left:742.7px;top:505.4px" width="8" height="9" viewBox="0 0 8 9"><path d="M7.5 1 H4.2 V6.2" fill="none" stroke="#cfcfcf" stroke-width="1.4"/><path d="M1.2 5 H7.2 L4.2 8.6Z" fill="#cfcfcf"/></svg>
<svg class="abs" style="left:765px;top:504px" width="12" height="12" viewBox="0 0 12 12"><circle cx="6" cy="6" r="5.2" fill="none" stroke="#d4d4d4" stroke-width="1.4"/><path d="M9.7 2.3 A5.2 5.2 0 0 1 2.3 9.7Z" fill="#d4d4d4"/></svg>
<svg class="abs" style="left:790.4px;top:501.2px" width="8.8" height="15.6" viewBox="0 0 8.8 15.6"><rect x="0.9" y="0.9" width="7" height="6.6" rx="3.2" fill="none" stroke="#cfcfcf" stroke-width="1.7"/><rect x="0.9" y="8.1" width="7" height="6.6" rx="3.2" fill="none" stroke="#cfcfcf" stroke-width="1.7"/><rect x="2.9" y="3.6" width="3" height="8.4" rx="1.5" fill="#303030"/><rect x="3.6" y="4.2" width="1.6" height="7.2" rx="0.8" fill="#e2e2e2"/></svg>
<div class="th " style="left:803.5px;top:499.5px;"></div>
<div class="t" style="left:848.5px;top:503.7px;color:#dcdcdc;">曲线<span style="font-size:11.3px;margin-left:5.2px">1</span></div>
<svg class="abs" style="left:709.0px;top:533.5px" width="15" height="10" viewBox="0 0 15 10"><path d="M0.2 5 C2.8 1.4 5.2 0.4 7.5 0.4 C9.8 0.4 12.2 1.4 14.8 5 C12.2 8.6 9.8 9.6 7.5 9.6 C5.2 9.6 2.8 8.6 0.2 5Z" fill="#d2d2d2"/><circle cx="7.5" cy="4.9" r="2.7" fill="#262626"/><circle cx="8.5" cy="3.9" r="0.9" fill="#d2d2d2"/></svg>
<svg class="abs" style="left:737px;top:532px" width="7" height="12" viewBox="0 0 7 12"><path d="M1 0.8 L5.6 6 L1 11.2" fill="none" stroke="#9c9c9c" stroke-width="1.2"/></svg>
<svg class="abs" style="left:749px;top:531.6px" width="15" height="12" viewBox="0 0 15 12"><path d="M0 0.6 H5.6 L6.6 2 H15 V12 H0Z" fill="#cfcfcf"/><rect x="0" y="2.6" width="15" height="0.9" fill="#e4e4e4" opacity="0.0"/></svg>
<div class="t" style="left:777px;top:532.2px;color:#dcdcdc;">建筑</div>
<svg class="abs" style="left:709.0px;top:562px" width="15" height="10" viewBox="0 0 15 10"><path d="M0.2 5 C2.8 1.4 5.2 0.4 7.5 0.4 C9.8 0.4 12.2 1.4 14.8 5 C12.2 8.6 9.8 9.6 7.5 9.6 C5.2 9.6 2.8 8.6 0.2 5Z" fill="#d2d2d2"/><circle cx="7.5" cy="4.9" r="2.7" fill="#262626"/><circle cx="8.5" cy="3.9" r="0.9" fill="#d2d2d2"/></svg>
<div class="th " style="left:736.5px;top:556.0px;"></div>
<div class="t" style="left:781px;top:560.7px;color:#dcdcdc;">背景</div>
<svg class="abs" style="left:913px;top:559.5px" width="11" height="14" viewBox="0 0 11 14"><path d="M2.6 6.5 V4 A2.9 2.9 0 0 1 8.4 4 V6.5" fill="none" stroke="#d6d6d6" stroke-width="1.6"/><rect x="0.3" y="6.2" width="10.4" height="7.5" rx="0.8" fill="#d6d6d6"/><rect x="4.7" y="8.6" width="1.6" height="2.8" fill="#323232"/></svg>
<div class="abs" style="left:942px;top:129px;width:18px;height:452px;background:#2a2a2a;border-left:1px solid #272727;box-sizing:border-box"></div>
<svg class="abs" style="left:947px;top:137.5px" width="9" height="6" viewBox="0 0 9 6"><path d="M0.7 5.2 L4.5 1.4 L8.3 5.2" fill="none" stroke="#c4c4c4" stroke-width="1.4"/></svg>
<div class="abs" style="left:944px;top:166px;width:13.5px;height:386px;background:#4e4e4e"></div>
<svg class="abs" style="left:947px;top:564.5px" width="9" height="6" viewBox="0 0 9 6"><path d="M0.7 0.8 L4.5 4.6 L8.3 0.8" fill="none" stroke="#c4c4c4" stroke-width="1.4"/></svg>
</div></div>
</body>
</html>
